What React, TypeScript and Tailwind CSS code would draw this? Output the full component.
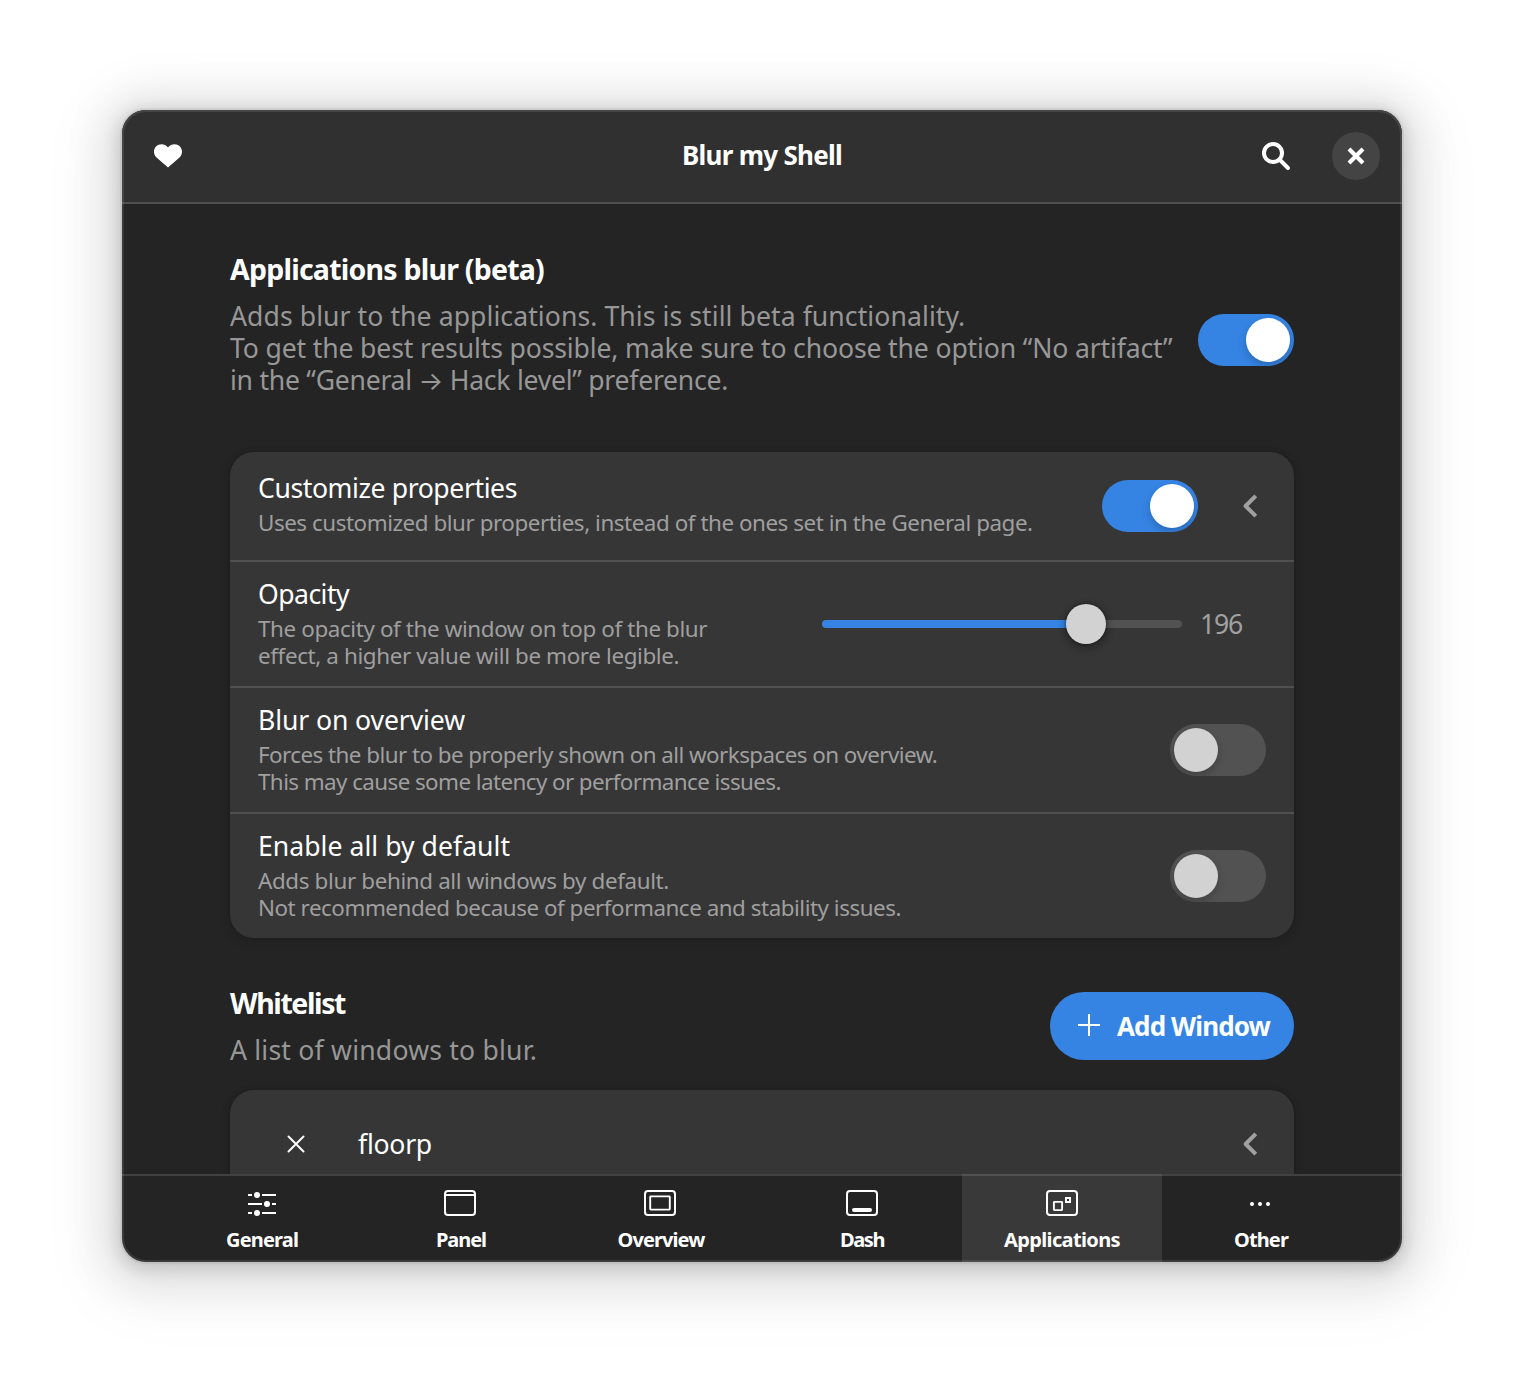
import type { ReactNode } from "react";

function Switch({ on = false, className = "" }: { on?: boolean; className?: string }) {
  return (
    <div
      className={`flex h-[52px] w-24 shrink-0 rounded-full p-1 overflow-hidden ${
        on ? "justify-end bg-[#3584e4]" : "justify-start bg-[#525252]"
      } ${className}`}
    >
      <div
        className={`size-11 rounded-full shadow-[0_4px_8px_rgba(0,0,6,0.2)] ${on ? "bg-white" : "bg-[#d2d2d2]"}`}
      />
    </div>
  );
}

function Chevron() {
  return (
    <svg viewBox="0 0 16 24" className="h-6 w-4 shrink-0" fill="none" stroke="#a0a0a0" strokeWidth="4">
      <path d="M13.8 1.8 3.6 12l10.2 10.2" strokeLinejoin="round" />
    </svg>
  );
}

function Row({ title, lines, children, tall = false }: { title: ReactNode; lines: ReactNode[]; children: ReactNode; tall?: boolean }) {
  return (
    <div className={`box-content flex items-center justify-between px-7 ${tall ? "h-[124px]" : "h-[108px]"}`}>
      <div className={`self-start ${tall ? "pt-4" : "pt-5"}`}>
        <div className="text-[26.6px] leading-8 text-white">{title}</div>
        <div className="mt-[5px] text-[22.4px] leading-[27px] text-[#9f9f9f]">
          {lines.map((line, i) => (
            <div key={i}>{line}</div>
          ))}
        </div>
      </div>
      {children}
    </div>
  );
}

function Tab({ icon, label, active = false }: { icon: ReactNode; label: ReactNode; active?: boolean }) {
  return (
    <div
      className={`flex w-[200px] flex-col items-center border-t-2 pt-3 ${
        active ? "border-[#515151] bg-[#393939]" : "border-[#414141]"
      }`}
    >
      <svg viewBox="0 0 32 32" className="size-8 overflow-visible" fill="none" stroke="white" strokeWidth="2">
        {icon}
      </svg>
      <div className="mt-1.5 text-xl leading-7 font-bold text-white">{label}</div>
    </div>
  );
}

const frame = <rect x="1" y="3" width="30" height="24" rx="3" />;

export default function App() {
  return (
    <div className="flex h-[1396px] w-[1524px] items-start justify-center overflow-hidden bg-white pt-[110px] font-['Noto_Sans',sans-serif] whitespace-nowrap">
      <div className="relative flex h-[1152px] w-[1280px] flex-col overflow-hidden rounded-3xl bg-[#242424] shadow-[0_4px_16px_4px_rgba(0,0,0,0.13),0_6px_40px_20px_rgba(0,0,0,0.09),0_12px_64px_32px_rgba(0,0,0,0.04),0_0_0_2px_rgba(0,0,0,0.05)]">
        <header className="grid h-[94px] shrink-0 grid-cols-[1fr_auto_1fr] items-center border-b-2 border-[#4f4f4f] bg-[#303030] px-[22px]">
          <svg viewBox="0 0 28 24" className="ml-2.5 h-6 w-7" fill="white">
            <path d="M7.5 0.3C3.3 0.3 0 3.4 0 7.7c0 2.4 1 4.3 2.8 6L14 23.4l11.2-9.7c1.8-1.7 2.8-3.6 2.8-6C28 3.4 24.700 0.300 20.500 0.300c-2.700 0-4.600 1.100-6.500 3.200C12.100 1.400 10.200 0.300 7.500 0.300Z" />
          </svg>
          <div className="pb-0.5 text-center text-[26px] font-bold tracking-[-0.73px] text-white">Blur my Shell</div>
          <div className="flex items-center justify-end gap-[41px]">
            <svg viewBox="0 0 30 30" className="size-[30px]" fill="none" stroke="white" strokeWidth="4">
              <circle cx="12" cy="12" r="9" />
              <path d="m18.500 18.500 8.500 8.500" strokeLinecap="round" />
            </svg>
            <div className="flex size-12 items-center justify-center rounded-full bg-[#444444]">
              <svg viewBox="0 0 18 18" className="size-[18px]" stroke="white" strokeWidth="4.200">
                <path d="m2 2 14 14M16 2 2 16" />
              </svg>
            </div>
          </div>
        </header>

        <main className="min-h-0 flex-1 overflow-hidden px-[108px] pt-[47px]">
          <section className="flex h-[145px] items-start justify-between">
            <div>
              <h2 className="text-[28.5px] leading-9 font-bold tracking-[-0.77px] text-white">Applications blur (beta)</h2>
              <p className="mt-[13px] text-[26.6px] leading-8 text-[#979797]">
                <span className="block tracking-[0.07px]">Adds blur to the applications. This is still beta functionality.</span>
                <span className="block tracking-[-0.15px]">
                  To get the best results possible, make sure to choose the option “No artifact”
                </span>
                <span className="block tracking-[-0.26px]">
                  in the “General <span className="font-['Inter'] text-[26px] leading-none">→</span> Hack level” preference.
                </span>
              </p>
            </div>
            <Switch on className="mt-[63px]" />
          </section>

          <section className="mt-14 divide-y-2 divide-[#505050] rounded-3xl bg-[#363636] shadow-[0_0_0_2px_rgba(0,0,6,0.03),0_2px_6px_2px_rgba(0,0,6,0.07),0_4px_12px_4px_rgba(0,0,6,0.03)]">
            <Row
              title={<span className="tracking-[-0.41px]">Customize properties</span>}
              lines={[
                <span className="tracking-[-0.45px]">
                  Uses customized blur properties, instead of the ones set in the General page.
                </span>,
              ]}
            >
              <div className="flex items-center gap-11 pr-2">
                <Switch on />
                <Chevron />
              </div>
            </Row>
            <Row
              tall
              title={<span className="tracking-[-0.55px]">Opacity</span>}
              lines={[
                <span className="tracking-[-0.38px]">The opacity of the window on top of the blur</span>,
                <span className="tracking-[-0.37px]">effect, a higher value will be more legible.</span>,
              ]}
            >
              <div className="flex items-center gap-[18px] pr-6">
                <div className="flex h-10 w-[360px] items-center">
                  <div className="h-2 w-[246px] rounded-l-full bg-[#3584e4]" />
                  <div className="z-10 -mx-0.5 size-10 shrink-0 rounded-full bg-[#d2d2d2] shadow-[0_0_0_2px_rgba(0,0,0,0.1),0_2px_6px_2px_rgba(0,0,0,0.2),0_4px_8px_2px_rgba(0,0,0,0.1)]" />
                  <div className="h-2 flex-1 rounded-r-full bg-[#525252]" />
                </div>
                <div className="text-[26.6px] leading-8 tracking-[-1.2px] text-[#a0a0a0]">196</div>
              </div>
            </Row>
            <Row
              tall
              title={<span className="tracking-[-0.11px]">Blur on overview</span>}
              lines={[
                <span className="tracking-[-0.55px]">Forces the blur to be properly shown on all workspaces on overview.</span>,
                <span className="tracking-[-0.58px]">This may cause some latency or performance issues.</span>,
              ]}
            >
              <Switch />
            </Row>
            <Row
              tall
              title={<span className="tracking-[0.03px]">Enable all by default</span>}
              lines={[
                <span className="tracking-[-0.36px]">Adds blur behind all windows by default.</span>,
                <span className="tracking-[-0.47px]">Not recommended because of performance and stability issues.</span>,
              ]}
            >
              <Switch />
            </Row>
          </section>

          <section className="mt-[47px] flex h-[81px] items-start justify-between">
            <div>
              <h2 className="text-[28.5px] leading-9 font-bold tracking-[-1.41px] text-white">Whitelist</h2>
              <p className="mt-[13px] text-[26.6px] leading-8 tracking-[0.2px] text-[#979797]">A list of windows to blur.</p>
            </div>
            <div className="mt-[7px] flex h-[68px] w-[244px] items-center rounded-full bg-[#3584e4] pl-7">
              <svg viewBox="0 0 22 22" className="mb-0.5 size-[22px]" stroke="white" strokeWidth="2">
                <path d="M11 0v22M0 11h22" />
              </svg>
              <span className="ml-[17px] text-[26px] leading-8 font-bold tracking-[-0.89px] text-white">Add Window</span>
            </div>
          </section>

          <section className="mt-6 flex h-[108px] items-center rounded-3xl bg-[#363636] pr-9 pl-[57px] shadow-[0_0_0_2px_rgba(0,0,6,0.03),0_2px_6px_2px_rgba(0,0,6,0.07),0_4px_12px_4px_rgba(0,0,6,0.03)]">
            <svg viewBox="0 0 18 18" className="size-[18px]" stroke="white" strokeWidth="2" strokeLinecap="round">
              <path d="m1.500 1.500 15 15M16.500 1.500l-15 15" />
            </svg>
            <span className="ml-[53px] flex-1 text-[26.6px] leading-8 tracking-[-0.26px] text-white">floorp</span>
            <Chevron />
          </section>
        </main>

        <nav className="flex h-[88px] shrink-0">
          <div className="flex-1 border-t-2 border-[#414141]" />
          <Tab
            label={<span className="tracking-[-0.83px]">General</span>}
            icon={
              <>
                <path d="M2 7h4M16 7h14M2 16h14M26 16h4M2 25h4M16 25h14" />
                <g fill="white" stroke="none">
                  <circle cx="11" cy="7" r="3" />
                  <circle cx="21" cy="16" r="3" />
                  <circle cx="11" cy="25" r="3" />
                </g>
              </>
            }
          />
          <Tab label={<span className="pr-0.5 tracking-[-1.06px]">Panel</span>} icon={<g transform="translate(-2)">{frame}<path d="M2 7h28" /></g>} />
          <Tab
            label={<span className="pr-0.5 tracking-[-0.9px]">Overview</span>}
            icon={
              <g transform="translate(-2)">
                {frame}
                <rect x="6.200" y="8.400" width="19.600" height="13.200" rx="0.500" strokeWidth="1.900" />
              </g>
            }
          />
          <Tab label={<span className="tracking-[-1.42px]">Dash</span>} icon={<>{frame}<path d="M8 22h16" strokeWidth="4" strokeLinecap="round" /></>} />
          <Tab
            active
            label={<span className="tracking-[-0.63px]">Applications</span>}
            icon={
              <>
                {frame}
                <rect x="7.900" y="13.900" width="8.200" height="8.200" rx="0.500" strokeWidth="1.900" />
                <rect x="20" y="10" width="4" height="4" strokeWidth="2" />
              </>
            }
          />
          <Tab
            label={<span className="pr-0.5 tracking-[-0.88px]">Other</span>}
            icon={
              <g fill="white" stroke="none" transform="translate(-2)">
                <circle cx="8" cy="16" r="2" />
                <circle cx="16" cy="16" r="2" />
                <circle cx="24" cy="16" r="2" />
              </g>
            }
          />
          <div className="flex-1 border-t-2 border-[#414141]" />
        </nav>

        <div className="pointer-events-none absolute inset-0 rounded-3xl border-2 border-white/10" />
      </div>
    </div>
  );
}
